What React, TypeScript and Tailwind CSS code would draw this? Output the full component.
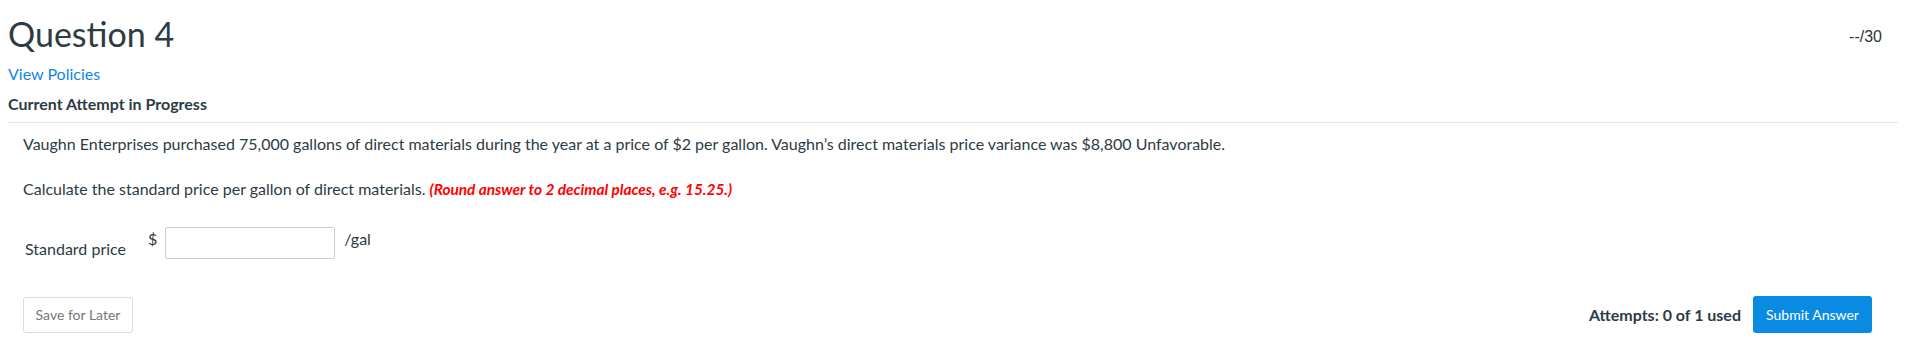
export default function App() {
  return (
    <div className="h-[355px] w-full bg-white font-['Lato','Noto_Sans',sans-serif] text-[#2d3b45]">
      <div className="pl-2 pr-[15px]">
        <div className="flex items-start justify-between pt-[13px]">
          <h1 className="text-[34px] font-normal leading-[42px] text-[#2d3b45]">Question 4</h1>
          <span className="mr-4 mt-[14px] font-['Liberation_Sans',Arial,sans-serif] text-[16px] leading-5 text-[#333]">--/30</span>
        </div>
        <a href="#" className="mt-[9px] block text-[16px] leading-5 text-[#0d87e9]">View Policies</a>
        <div className="mt-[10px] text-[16px] font-bold leading-5 text-[#2d3b45]">Current Attempt in Progress</div>
        <div className="mt-[8px] border-t border-[#e6e6e6]" />
        <div className="pl-[15px] pr-[26px]">
          <p className="mt-[11px] text-[16px] leading-5">
            Vaughn Enterprises purchased 75,000 gallons of direct materials during the year at a price of $2 per gallon. Vaughn’s direct materials price variance was $8,800 Unfavorable.
          </p>
          <p className="mt-[25px] text-[16px] leading-5">
            Calculate the standard price per gallon of direct materials.{' '}
            <span className="text-[15.4px] font-bold italic text-[#ff0000]">(Round answer to 2 decimal places, e.g. 15.25.)</span>
          </p>
          <div className="mt-[28px] flex items-start">
            <span className="mt-[12px] w-[125px] pl-[2px] text-[16px] leading-5">Standard price</span>
            <span className="mt-[2px] text-[16px] leading-5">$</span>
            <input type="text" className="ml-2 h-8 w-[170px] rounded-[2px] border border-[#c7cdd1] bg-white" />
            <span className="ml-[9px] mt-[2px] text-[16px] leading-5">/gal</span>
          </div>
          <div className="mt-[37px] flex items-center justify-between">
            <button className="h-9 w-[110px] rounded-[3px] border border-[#dcdcdc] bg-white text-[14px] text-[#777]">Save for Later</button>
            <div className="flex items-center">
              <span className="text-[16px] font-bold">Attempts: 0 of 1 used</span>
              <button className="ml-3 h-[37px] w-[119px] rounded-[3px] bg-[#0a8be3] text-[14px] text-white">Submit Answer</button>
            </div>
          </div>
        </div>
      </div>
    </div>
  );
}
